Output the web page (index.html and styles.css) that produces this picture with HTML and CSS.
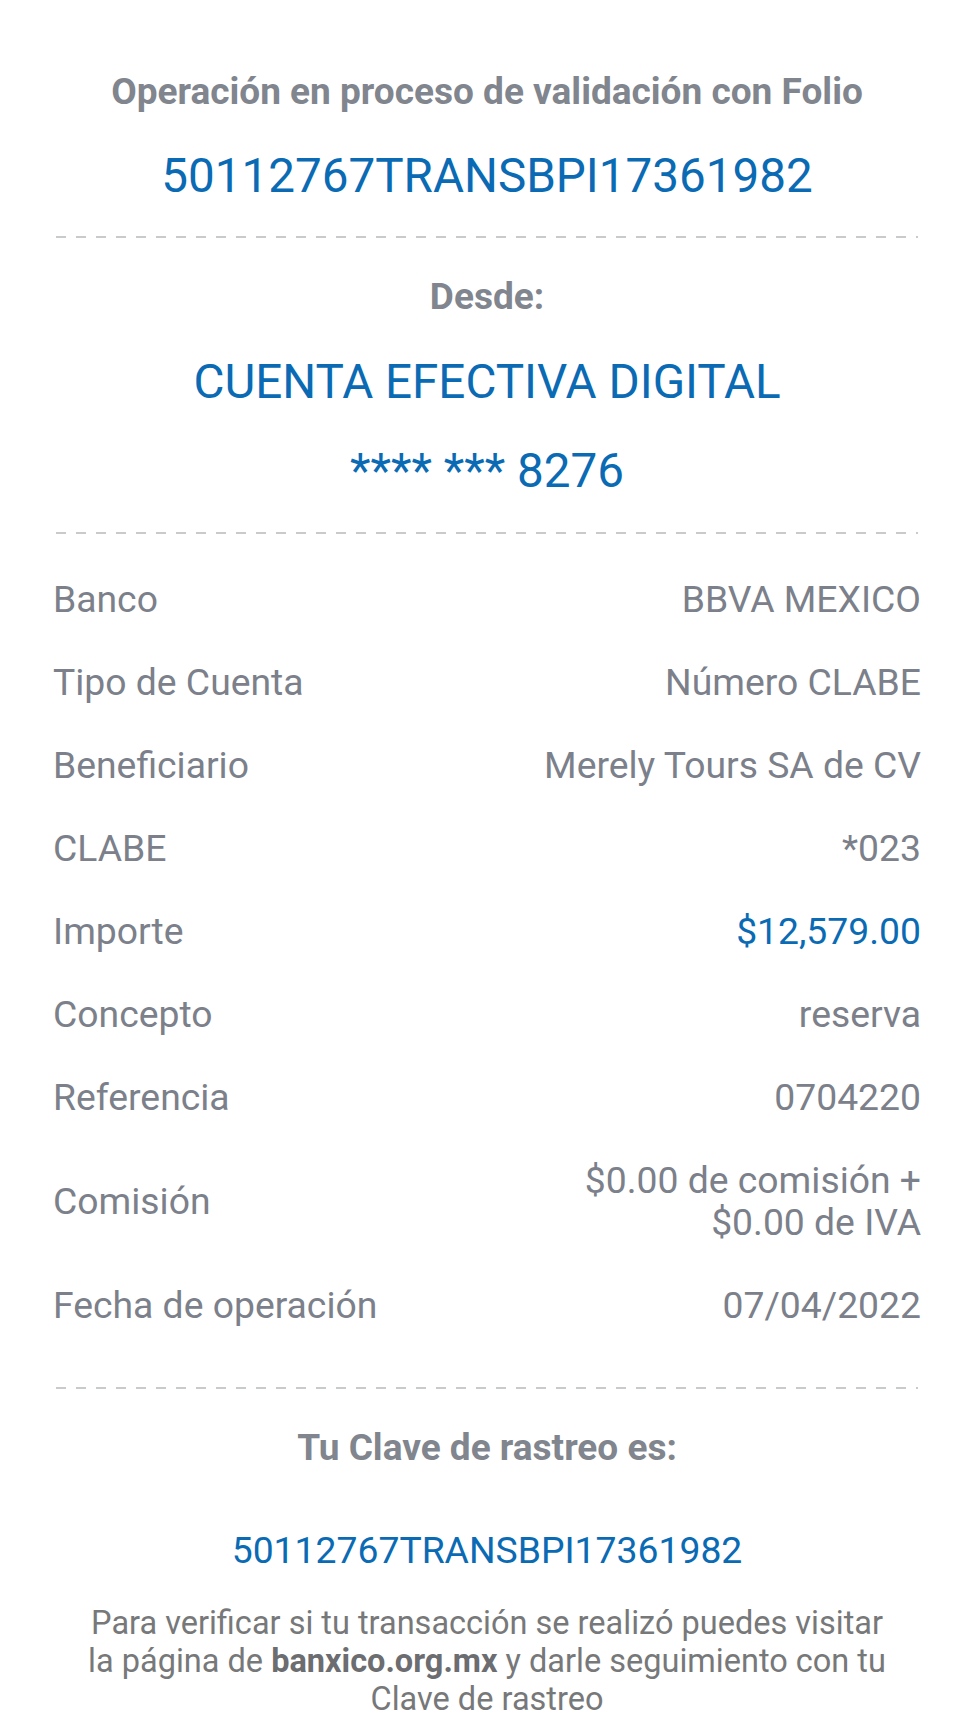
FILE: index.html
```html
<!DOCTYPE html>
<html lang="es">
<head>
    <meta charset="UTF-8">
    <title>Comprobante</title>
    <link rel="stylesheet" href="styles.css">
</head>
<body>
    <div class="receipt">
        <div class="block head">
            <p class="caption">Operación en proceso de validación con Folio</p>
            <p class="big-blue folio">50112767TRANSBPI17361982</p>
        </div>

        <div class="dashes"></div>

        <div class="block origin">
            <p class="caption">Desde:</p>
            <p class="big-blue account">CUENTA EFECTIVA DIGITAL</p>
            <p class="big-blue number">**** *** 8276</p>
        </div>

        <div class="dashes"></div>

        <div class="details">
            <div class="row"><span class="label">Banco</span><span class="value">BBVA MEXICO</span></div>
            <div class="row"><span class="label">Tipo de Cuenta</span><span class="value">Número CLABE</span></div>
            <div class="row"><span class="label">Beneficiario</span><span class="value">Merely Tours SA de CV</span></div>
            <div class="row"><span class="label">CLABE</span><span class="value">*023</span></div>
            <div class="row"><span class="label">Importe</span><span class="value amount">$12,579.00</span></div>
            <div class="row"><span class="label">Concepto</span><span class="value">reserva</span></div>
            <div class="row"><span class="label">Referencia</span><span class="value">0704220</span></div>
            <div class="row"><span class="label">Comisión</span><span class="value">$0.00 de comisión +<br>$0.00 de IVA</span></div>
            <div class="row"><span class="label">Fecha de operación</span><span class="value">07/04/2022</span></div>
        </div>

        <div class="dashes"></div>

        <div class="block tracking">
            <p class="caption">Tu Clave de rastreo es:</p>
            <p class="tracking-key">50112767TRANSBPI17361982</p>
            <p class="note">Para verificar si tu transacción se realizó puedes visitar la página de <b>banxico.org.mx</b> y darle seguimiento con tu Clave de rastreo</p>
        </div>
    </div>
</body>
</html>
```

FILE: styles.css
```css
* {
    margin: 0;
    padding: 0;
    box-sizing: border-box;
}
body {
    background: #fff;
    font-family: Roboto, "Noto Sans", sans-serif;
    color: #7b808a;
}
.receipt {
    padding: 0 53px;
}
.block {
    text-align: center;
}
.caption {
    font-size: 37px;
    font-weight: 700;
    line-height: 42px;
    color: #80858e;
}
.big-blue {
    font-size: 47.6px;
    line-height: 54px;
    color: #0a6bb4;
}
.head {
    padding: 71px 0 33px;
}
.head .folio {
    margin-top: 36px;
}
/* linea punteada */
.dashes {
    height: 2px;
    margin: 0 3px;
    background-image: linear-gradient(to right, #c9cacc 50%, transparent 50%);
    background-size: 20px 2px;
}
.origin {
    padding: 38px 0 34px;
}
.origin .account {
    margin-top: 37px;
}
.origin .number {
    margin-top: 35px;
}
.details {
    padding: 23px 0 41px;
}
.row {
    display: flex;
    justify-content: space-between;
    align-items: center;
    padding: 20.5px 0;
    font-size: 37.3px;
    line-height: 42px;
}
.value {
    text-align: right;
}
.value.amount {
    color: #0a6bb4;
}
.tracking {
    padding-top: 38px;
}
.tracking-key {
    margin-top: 60px;
    font-size: 37.3px;
    line-height: 42px;
    color: #0a6bb4;
}
.note {
    margin-top: 33px;
    padding: 0 28px;
    font-size: 32.5px;
    line-height: 38px;
    color: #777879;
}
.note b {
    font-weight: 700;
    color: #6c6d70;
}
```
